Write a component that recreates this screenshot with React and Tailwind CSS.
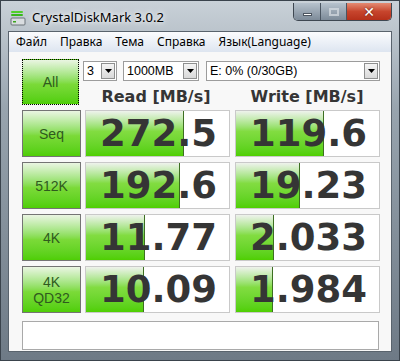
import React from 'react';

const rows = [
  { id: 'seq', label: ['Seq'], read: '272.5', readW: 98, write: '119.6', writeW: 88 },
  { id: '512k', label: ['512K'], read: '192.6', readW: 94, write: '19.23', writeW: 64 },
  { id: '4k', label: ['4K'], read: '11.77', readW: 59, write: '2.033', writeW: 38 },
  { id: 'qd32', label: ['4K', 'QD32'], read: '10.09', readW: 58, write: '1.984', writeW: 37 },
];

const menu = ['Файл', 'Правка', 'Тема', 'Справка', 'Язык(Language)'];

const Arrow = () => (
  <div className="w-[14px] h-[16px] mr-[1px] border border-[#8e8f8f] bg-linear-to-b from-[#f4f4f4] to-[#d9d9d9] flex items-center justify-center">
    <svg width="7" height="4" viewBox="0 0 7 4"><path d="M0 0h7L3.5 4z" fill="#000" /></svg>
  </div>
);

const Select = ({ value, className }) => (
  <div className={`h-[20px] border border-[#9c9c9c] bg-white flex items-center justify-between ${className}`}>
    <span className="pl-[3px] text-[12.5px] text-black leading-none">{value}</span>
    <Arrow />
  </div>
);

const LabelButton = ({ lines, focus }) => (
  <div
    className={`w-[59px] h-full flex flex-col items-center justify-center bg-linear-to-b from-[#eaf5e2] via-[#7bda38] via-55% to-[#4fce04] text-[#2f5a1e] text-[14px] leading-[16px] ${
      focus ? 'border border-dotted border-black' : 'border border-[#747474]'
    }`}
  >
    {lines.map((l) => (
      <span key={l}>{l}</span>
    ))}
  </div>
);

const ValueBox = ({ value, width }) => (
  <div className="relative flex-1 h-full border border-[#c9c9c9] bg-white overflow-hidden">
    <div
      className="absolute left-0 top-0 bottom-0 bg-linear-to-b from-[#eef2ec] via-[#82dc41] via-45% to-[#4fcf00] border-r border-[#3d6f22]"
      style={{ width: `${width}px` }}
    />
    <div className="relative h-full flex items-center pl-[14px] text-[37px] font-bold text-[#353535] leading-none" style={{ fontFamily: '"DejaVu Sans", sans-serif' }}>
      {value}
    </div>
  </div>
);

const App = () => {
  return (
    <div
      className="w-[400px] h-[361px] flex flex-col bg-linear-to-b from-[#c9d1d8] via-[#98a4ae] via-30% to-[#6e7a86] border border-[#3a434c] overflow-hidden"
      style={{ fontFamily: '"Liberation Sans", Arial, sans-serif' }}
    >
      {/* title bar */}
      <div className="h-[30px] flex items-start shrink-0">
        <div className="flex items-center pl-[9px] pt-[7px] gap-[6px]">
          <svg width="16" height="16" viewBox="0 0 16 16">
            <rect x="1" y="1" width="12" height="2" rx="1" fill="#4fd02a" />
            <rect x="1" y="4" width="12" height="2" rx="1" fill="#38b81c" />
            <rect x="1" y="8" width="14" height="7" rx="1" fill="#d9dde0" stroke="#6b7278" />
            <rect x="3" y="11" width="3" height="1.5" fill="#3aa51c" />
          </svg>
          <span className="text-[13px] text-black" style={{ fontFamily: '"Noto Sans", sans-serif', textShadow: '0 0 8px #fff, 0 0 4px #fff' }}>
            CrystalDiskMark 3.0.2
          </span>
        </div>
        <div className="ml-auto mr-[7px] mt-[2px] flex h-[18px] border border-[#3e4751] border-t-0 rounded-b-[5px] overflow-hidden">
          <div className="w-[27px] bg-linear-to-b from-[#b7c2cd] to-[#7d8b99] border-r border-[#4a5561] flex items-center justify-center">
            <div className="w-[9px] h-[3px] bg-white border border-[#4c5560] mt-[5px]" />
          </div>
          <div className="w-[26px] bg-linear-to-b from-[#b7c2cd] to-[#7d8b99] border-r border-[#4a5561] flex items-center justify-center">
            <div className="w-[10px] h-[8px] border-2 border-[#d8dee4] opacity-70" />
          </div>
          <div className="w-[44px] bg-linear-to-b from-[#e48a72] via-[#c7452d] to-[#b5301a] flex items-center justify-center">
            <span className="text-white font-bold text-[14px] leading-none" style={{ fontFamily: '"DejaVu Sans", sans-serif', textShadow: '0 0 2px #4a1a10' }}>✕</span>
          </div>
        </div>
      </div>

      <div className="flex-1 min-h-0 mx-[7px] mb-[8px] border border-[#59636d] flex flex-col">
        {/* menu bar */}
        <div
          className="h-[20px] shrink-0 flex items-center pl-[7px] gap-[13px] bg-linear-to-b from-[#fbfcfe] to-[#dde5f0] text-[12px] text-black"
          style={{ fontFamily: '"Noto Sans", sans-serif' }}
        >
          {menu.map((m) => (
            <span key={m}>{m}</span>
          ))}
        </div>

        {/* client */}
        <div className="flex-1 bg-[#f8f8f8] pl-[13px] pr-[11px] pt-[7px] flex flex-col">
          <div className="flex h-[46px] gap-[4px]">
            <LabelButton lines={['All']} focus />
            <div className="flex-1 flex flex-col">
              <div className="flex mt-[2px]">
                <Select value="3" className="w-[34px]" />
                <Select value="1000MB" className="w-[76px] ml-[6px]" />
                <Select value="E: 0% (0/30GB)" className="w-[174px] ml-[7px]" />
              </div>
              <div className="flex mt-[8px] gap-[5px] text-[16px] leading-[16px] font-bold text-[#353535]" style={{ fontFamily: '"DejaVu Sans", sans-serif' }}>
                <div className="flex-1 text-center">Read [MB/s]</div>
                <div className="flex-1 text-center">Write [MB/s]</div>
              </div>
            </div>
          </div>

          <div className="flex flex-col gap-[5px] mt-[5px]">
            {rows.map((r) => (
              <div key={r.id} className="flex h-[47px] gap-[4px]">
                <LabelButton lines={r.label} />
                <div className="flex-1 flex gap-[5px]">
                  <ValueBox value={r.read} width={r.readW} />
                  <ValueBox value={r.write} width={r.writeW} />
                </div>
              </div>
            ))}
          </div>

          <div className="mt-[8px] h-[29px] mr-[1px] border border-[#a9a9a9] bg-white" />
        </div>
      </div>
    </div>
  );
};

export default App;
